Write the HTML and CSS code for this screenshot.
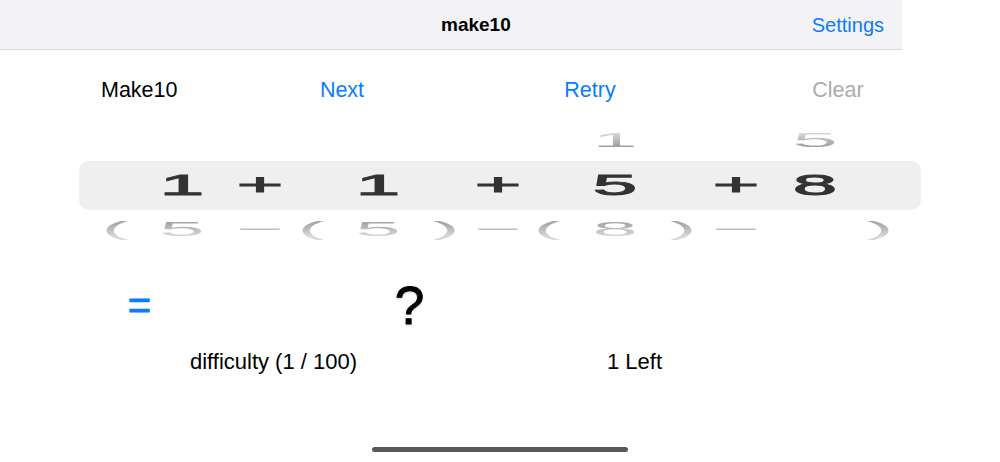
FILE: index.html
```html
<!DOCTYPE html>
<html lang="en">
<head>
<meta charset="utf-8">
<title>make10</title>
<link rel="stylesheet" href="styles.css">
</head>
<body>
<header class="navbar">
  <div class="nav-title">make10</div>
  <div class="nav-action">Settings</div>
</header>

<div class="toolbar">
  <div class="tool-label">Make10</div>
  <div class="tool-btn">Next</div>
  <div class="tool-btn">Retry</div>
  <div class="tool-btn disabled">Clear</div>
</div>

<div class="picker">
  <div class="wheel-row above">
    <span class="g"></span><span class="g"></span><span class="g"></span><span class="g"></span><span class="g"></span>
    <span class="g"></span><span class="g"></span><span class="g"></span><span class="g"></span><span class="g">1</span>
    <span class="g"></span><span class="g"></span><span class="g"></span><span class="g">5</span><span class="g"></span>
  </div>
  <div class="wheel-row selected">
    <span class="g"></span><span class="g">1</span><span class="g"></span><span class="g">+</span><span class="g"></span>
    <span class="g">1</span><span class="g"></span><span class="g">+</span><span class="g"></span><span class="g">5</span>
    <span class="g"></span><span class="g">+</span><span class="g"></span><span class="g">8</span><span class="g"></span>
  </div>
  <div class="wheel-row below">
    <span class="g">(</span><span class="g">5</span><span class="g"></span><span class="g">&minus;</span><span class="g">(</span>
    <span class="g">5</span><span class="g">)</span><span class="g">&minus;</span><span class="g">(</span><span class="g">8</span>
    <span class="g">)</span><span class="g">&minus;</span><span class="g"></span><span class="g"></span><span class="g">)</span>
  </div>
</div>

<div class="answer">
  <div class="equals">=</div>
  <div class="result">?</div>
</div>

<div class="status">
  <div class="status-item">difficulty (1 / 100)</div>
  <div class="status-item">1 Left</div>
</div>

<div class="home-indicator"></div>
</body>
</html>
```

FILE: styles.css
```css
html, body {
  margin: 0;
  padding: 0;
}
body {
  width: 1000px;
  height: 462px;
  overflow: hidden;
  background: #ffffff;
  font-family: "Liberation Sans", Arial, sans-serif;
  color: #000;
}

.navbar {
  width: 902px;
  height: 49px;
  background: #f3f3f7;
  border-bottom: 1px solid #d9d9dd;
  display: flex;
  align-items: center;
}
.nav-title {
  margin-left: 441px;
  margin-top: 1px;
  font-size: 19px;
  font-weight: bold;
}
.nav-action {
  margin-left: auto;
  margin-right: 18px;
  margin-top: 2px;
  font-size: 20px;
  color: #0a7cff;
}

.toolbar {
  margin-top: 15px;
  height: 50px;
  display: grid;
  grid-template-columns: 218px 248px 248px 248px;
  align-items: center;
  font-size: 21.5px;
}
.tool-label {
  padding-left: 101px;
}
.tool-btn {
  text-align: center;
  color: #0a7cff;
}
.tool-btn.disabled {
  color: #acacac;
}

.picker {
  margin-top: 3px;
  margin-left: 79px;
  width: 842px;
}
.wheel-row {
  display: grid;
  grid-template-columns: 72px 62px 19px 56px 46px 88px 48px 56px 42px 94px 42px 64px 18px 58px 72px;
  font-size: 29px;
}
.wheel-row .g {
  display: block;
  text-align: center;
  white-space: pre;
}
.wheel-row.above {
  height: 43px;
  line-height: 43px;
}
.wheel-row.above .g {
  transform: translateY(1px) scale(2.8, 0.72);
  background: linear-gradient(to bottom, #d6d6d6 28%, #9c9c9c 72%);
  -webkit-background-clip: text;
  background-clip: text;
  color: transparent;
}
.wheel-row.selected {
  height: 49px;
  line-height: 49px;
  background: #efefef;
  border-radius: 10px;
}
.wheel-row.selected .g {
  color: #333333;
  -webkit-text-stroke: 0.9px #333333;
  transform: scale(2.75, 1);
}
.wheel-row.below {
  height: 43px;
  line-height: 43px;
}
.wheel-row.below .g {
  transform: translateY(-2px) scale(2.8, 0.72);
  background: linear-gradient(to bottom, #a4a4a4 28%, #d8d8d8 72%);
  -webkit-background-clip: text;
  background-clip: text;
  color: transparent;
}

.answer {
  margin-top: 22px;
  height: 60px;
  display: grid;
  grid-template-columns: 279px 261px;
  align-items: center;
}
.equals {
  text-align: center;
  font-size: 40px;
  color: #0a7cff;
  -webkit-text-stroke: 0.8px #0a7cff;
}
.result {
  text-align: center;
  font-size: 53px;
  color: #000;
  -webkit-text-stroke: 0.9px #000;
  text-shadow: 0 1px 3px rgba(0, 0, 0, 0.25);
}

.status {
  height: 50px;
  margin-top: 2px;
  margin-left: 100px;
  display: grid;
  grid-template-columns: 347px 375px;
  align-items: center;
  font-size: 22px;
}
.status-item {
  text-align: center;
}

.home-indicator {
  margin-top: 60px;
  margin-left: 372px;
  width: 256px;
  height: 5px;
  border-radius: 3px;
  background: #5a5a5a;
}
```
